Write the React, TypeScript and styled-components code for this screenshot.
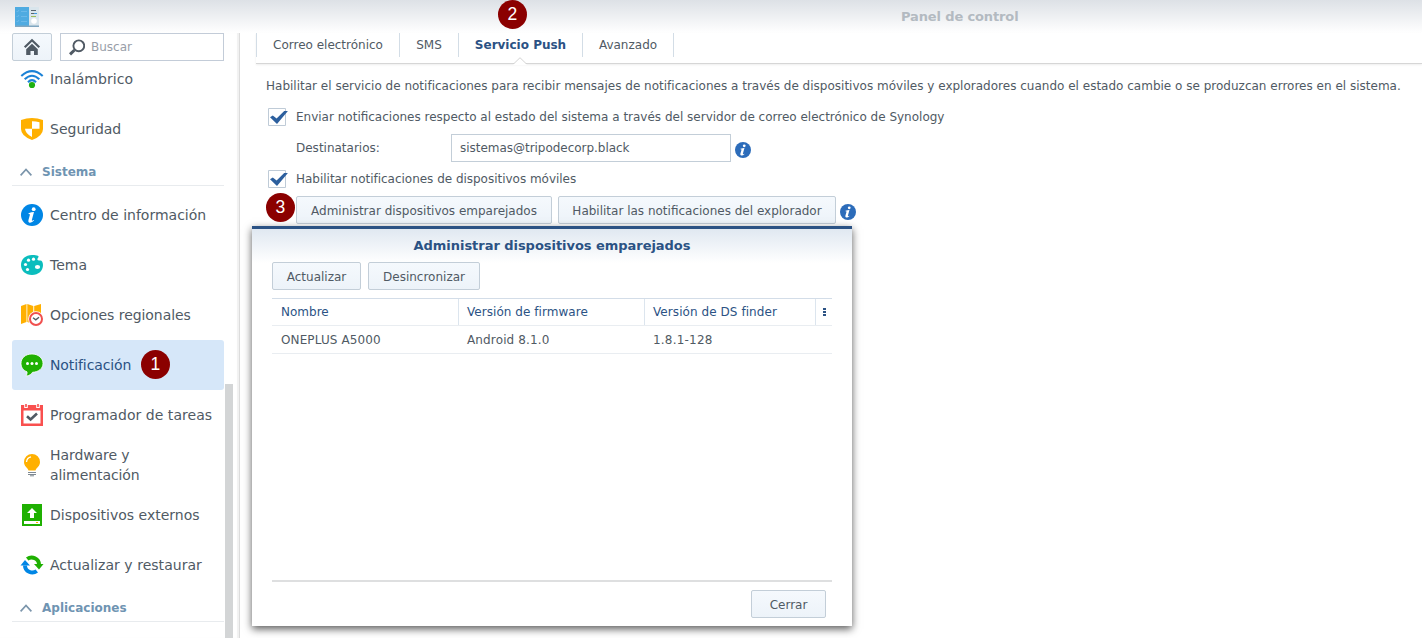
import React from 'react';
import styled, { createGlobalStyle, css } from 'styled-components';

const GlobalStyle = createGlobalStyle`
  * { box-sizing: border-box; }
  body {
    margin: 0;
    background: #fff;
    font-family: "DejaVu Sans", Verdana, sans-serif;
    font-size: 12px;
    color: #505a64;
    overflow: hidden;
  }
`;

const blue = '#2b5284';

const Window = styled.div`
  position: relative;
  width: 1422px;
  height: 638px;
  overflow: hidden;
  display: flex;
  flex-direction: column;
  background: #fff;
`;

const TitleBar = styled.header`
  flex: none;
  height: 33px;
  display: flex;
  align-items: center;
  padding: 0 0 0 14px;
  background: linear-gradient(#dde1e6, #fff);
`;

const WindowTitle = styled.div`
  margin-left: 861px;
  font-size: 13px;
  font-weight: bold;
  line-height: 33px;
  color: #b3bac1;
  white-space: nowrap;
  letter-spacing: -0.13px;
`;

const Body = styled.div`
  flex: 1;
  min-height: 0;
  display: flex;
`;

const Sidebar = styled.aside`
  flex: none;
  width: 240px;
  padding-left: 12px;
  display: flex;
  border-right: 1px solid #dcdcdc;
  box-shadow: inset -2px 0 1px #f1f1f1;
`;

const SidebarColumn = styled.div`
  width: 212px;
  display: flex;
  flex-direction: column;
`;

const SidebarTools = styled.div`
  flex: none;
  display: flex;
  gap: 8px;
`;

const buttonFace = css`
  border: 1px solid #c3ced8;
  border-radius: 2px;
  background: linear-gradient(#f5f9fd, #edf3f9);
`;

const HomeButton = styled.button`
  ${buttonFace}
  width: 40px;
  height: 28px;
  padding: 0;
  display: flex;
  align-items: center;
  justify-content: center;
`;

const Search = styled.div`
  flex: 1;
  height: 28px;
  border: 1px solid #c3ccd8;
  display: flex;
  align-items: center;
  gap: 6px;
  padding-left: 8px;
  color: #989ea8;
`;

const NavScroll = styled.div`
  flex: 1;
  min-height: 0;
  overflow: hidden;
`;

const NavList = styled.nav`
  margin-top: -7px;
`;

const NavItem = styled.div<{ $active?: boolean }>`
  height: 50px;
  display: flex;
  align-items: center;
  gap: 6px;
  padding-left: 8px;
  border-radius: 3px;
  font-size: 14px;
  line-height: 20px;
  background: ${(p) => (p.$active ? '#d6e7f9' : 'transparent')};
  color: ${(p) => (p.$active ? blue : '#505a64')};
`;

const NavLabel = styled.span<{ $track?: number }>`
  white-space: pre;
  letter-spacing: ${(p) => p.$track ?? 0}px;
`;

const NavSection = styled.div`
  height: 32px;
  margin-bottom: 4px;
  padding: 5px 0 0 8px;
  border-bottom: 1px solid #e8ebee;
  display: flex;
  align-items: center;
  gap: 10px;
  font-weight: bold;
  color: #6f94b2;
`;

const ScrollThumb = styled.div`
  width: 8px;
  height: 254px;
  margin-left: 1px;
  align-self: flex-end;
  background: #d3d5d6;
`;

const Main = styled.main`
  flex: 1;
  min-width: 0;
  padding-left: 16px;
`;

const Tabs = styled.div`
  height: 31px;
  display: flex;
  border-bottom: 1px solid #d6d6d6;
  box-shadow: 0 1px 2px #eee;
`;

const Tab = styled.div<{ $width: number; $active?: boolean }>`
  position: relative;
  width: ${(p) => p.$width}px;
  height: 24px;
  display: flex;
  justify-content: center;
  line-height: 25px;
  white-space: nowrap;
  border-left: 1px solid #d3dde6;
  font-weight: ${(p) => (p.$active ? 'bold' : 'normal')};
  color: ${(p) => (p.$active ? blue : 'inherit')};
  &:last-child { border-right: 1px solid #d3dde6; }
`;

const TabNotch = styled.svg`
  position: absolute;
  left: 53px;
  top: 24px;
`;

const Form = styled.div`
  padding: 7px 0 0 10px;
`;

const Row = styled.div<{ $indent?: number }>`
  height: 31px;
  display: flex;
  align-items: flex-start;
  padding-left: ${(p) => p.$indent ?? 0}px;
`;

const Text = styled.span<{ $track?: number; $width?: number }>`
  line-height: 31px;
  white-space: nowrap;
  letter-spacing: ${(p) => p.$track ?? 0}px;
  width: ${(p) => (p.$width ? `${p.$width}px` : 'auto')};
`;

const CheckMark = styled.svg`
  flex: none;
  margin: 6px 8px 0 2px;
`;

const Field = styled.div`
  width: 280px;
  height: 28px;
  margin-top: 1px;
  padding-left: 8px;
  border: 1px solid #c3ced8;
  line-height: 27px;
  letter-spacing: -0.03px;
`;

const Button = styled.button<{ $width: number }>`
  ${buttonFace}
  flex: none;
  width: ${(p) => p.$width}px;
  height: 28px;
  padding: 2px 0 0;
  font: inherit;
  color: inherit;
  line-height: 24px;
  white-space: nowrap;
`;

const FormButton = styled(Button)`
  margin: 1px 6px 0 0;
`;

const InfoMark = styled.svg<{ $gap: number }>`
  flex: none;
  margin: 9px 0 0 ${(p) => p.$gap}px;
`;

const Dialog = styled.section`
  position: absolute;
  left: 252px;
  top: 226px;
  width: 600px;
  height: 400px;
  padding: 0 20px;
  display: flex;
  flex-direction: column;
  border-top: 3px solid ${blue};
  background: linear-gradient(#e0e8f1, #fff 34px);
  box-shadow: 0 3px 8px rgba(0, 0, 0, 0.65);
`;

const DialogTitle = styled.h2`
  margin: 0;
  height: 33px;
  font-size: 13px;
  line-height: 33px;
  text-align: center;
  letter-spacing: -0.04px;
  color: ${blue};
`;

const DialogTools = styled.div`
  display: flex;
  gap: 7px;
  margin-bottom: 8px;
`;

const GridRow = styled.div<{ $head?: boolean }>`
  display: grid;
  grid-template-columns: 187px 186px 171px 16px;
  height: 28px;
  border-top: ${(p) => (p.$head ? '1px solid #d3dde8' : '0')};
  border-bottom: 1px solid #e9edf1;
  color: ${(p) => (p.$head ? blue : 'inherit')};
`;

const Cell = styled.div<{ $head?: boolean; $track?: number }>`
  padding-left: 8px;
  line-height: ${(p) => (p.$head ? 26 : 28)}px;
  white-space: nowrap;
  letter-spacing: ${(p) => p.$track ?? 0}px;
  border-right: 1px solid ${(p) => (p.$head ? '#dce5ee' : 'transparent')};
  &:first-child { padding-left: 9px; }
`;

const MenuCell = styled.div`
  display: flex;
  align-items: center;
  padding-left: 7px;
`;

const DialogFooter = styled.div`
  margin-top: auto;
  height: 46px;
  padding: 8px 6px 0 0;
  display: flex;
  justify-content: flex-end;
  border-top: 2px solid #dedfe0;
`;

const Badge = styled.div<{ $x: number; $y: number }>`
  position: absolute;
  left: ${(p) => p.$x}px;
  top: ${(p) => p.$y}px;
  width: 29.600px;
  height: 29.600px;
  border-radius: 50%;
  background: #8b0000;
  color: #fff;
  font: 17.500px/29px "Liberation Sans", Arial, sans-serif;
  text-align: center;
`;

const PanelIcon = () => (
  <svg width="26" height="22" viewBox="0 0 26 22">
    <path d="M1 1h14v19H1z" fill="#4fabe1" />
    <path d="M15 1h10v19H15z" fill="#d9e5ec" />
    <path d="M1 19.500h24V21H1z" fill="#7fa6c0" />
    <path d="M2.500 5l1 1 1.500-2M2.500 10l1 1 1.500-2M2.500 15l1 1 1.500-2M7 5.500h6M7 10.500h6M7 15.500h6" stroke="#74bdea" strokeWidth=".8" fill="none" />
    <path d="M17 4.500h5M17 7.500h3" stroke="#58646e" />
    <path d="M20 7.500h3" stroke="#3f9bdc" />
    <path d="M17 10.500h5" stroke="#9bbd57" />
    <circle cx="20" cy="15" r="2.800" fill="#fff" />
  </svg>
);

const HomeIcon = () => (
  <svg width="18" height="18" viewBox="0 0 18 18">
    <path d="M1.700 9.300L9 2.300l7.300 7" fill="none" stroke="#505a64" strokeWidth="2.200" />
    <path d="M3.200 11.300L9 5.800l5.800 5.500V17H11v-4H7.500v4H3.200z" fill="#505a64" />
  </svg>
);

const SearchIcon = () => (
  <svg width="16" height="17" viewBox="0 0 16 17">
    <circle cx="9.800" cy="6.800" r="5.400" fill="none" stroke="#505a64" strokeWidth="1.900" />
    <path d="M5.500 11L1 15.300" stroke="#505a64" strokeWidth="3" />
  </svg>
);

const Chevron = () => (
  <svg width="12" height="8" viewBox="0 0 12 8">
    <path d="M.6 7.300L6 1.500l5.400 5.800" fill="none" stroke="#7b95ab" strokeWidth="1.700" />
  </svg>
);

const NavSvg = ({ children }: { children: React.ReactNode }) => (
  <svg width="24" height="24" viewBox="0 0 24 24">{children}</svg>
);

const WifiIcon = () => (
  <NavSvg>
    <g fill="none" stroke="#1b82d6" strokeWidth="2.100">
      <path d="M1.300 9Q12-.600 22.700 9" />
      <path d="M4.700 12.200Q12 5.300 19.300 12.200" />
      <path d="M8 15.300Q12 11 16 15.300" />
    </g>
    <circle cx="12" cy="18" r="3.100" fill="#20b010" />
  </NavSvg>
);

const ShieldIcon = () => (
  <NavSvg>
    <path d="M1 3Q12-1 23 3V12q0 7-11 11Q1 19 1 12z" fill="#ffb000" />
    <path d="M12 4.200q4 0 7.500 1v6.600H12zM5 11.800h7V20q-6.500-3-7-8.200z" fill="#fff" />
  </NavSvg>
);

const InfoGlyph = () => (
  <>
    <circle cx="13.700" cy="6.200" r="1.900" fill="#fff" />
    <path d="M8.500 10.200q3-1.100 5.500-1.100l-2.100 7.600q-.4 1.800 1.700.3l.5.600q-2.200 2.400-4.500 2.100-1.700-.3-1.200-2.500l1.600-5.600q.2-.7-1.400-.7z" fill="#fff" />
  </>
);

const InfoIcon = () => (
  <NavSvg>
    <circle cx="12" cy="12" r="11" fill="#0086e5" />
    <InfoGlyph />
  </NavSvg>
);

const PaletteIcon = () => (
  <NavSvg>
    <path d="M12 2C18 2 19.600 3.300 18.200 4.600 16.500 6.600 17.600 8 20 7.500c1.600-.4 3 1.500 3 4.500 0 5.700-4.500 10-11 10S1 17.700 1 12 5.500 2 12 2z" fill="#0bbdbd" />
    <g fill="#fff">
      <circle cx="13.500" cy="6.200" r="1.600" />
      <circle cx="8.500" cy="7.200" r="1.600" />
      <circle cx="5.500" cy="11.500" r="1.600" />
      <circle cx="7.500" cy="16.500" r="1.600" />
      <ellipse cx="17.500" cy="14" rx="2.600" ry="2.100" />
    </g>
  </NavSvg>
);

const RegionIcon = () => (
  <NavSvg>
    <path d="M1 3l5.500-2v18L1 21zM7.300 1l6 2v18l-6-2zM14.200 3L21 1v18l-6.800 2z" fill="#ffb000" />
    <circle cx="16" cy="16" r="7.800" fill="#fff" />
    <circle cx="16" cy="16" r="6" fill="#fff" stroke="#f0504f" strokeWidth="2" />
    <path d="M13 14.800l2.800 2 3.200-2.500" fill="none" stroke="#505a64" strokeWidth="1.400" />
  </NavSvg>
);

const ChatIcon = () => (
  <NavSvg>
    <path d="M12 1C5.500 1 1 4.900 1 10.500c0 4 2.500 7 6 8.300.3 1.500-.2 2.700-1 4.400 3.500-.5 5.500-2.200 6.500-3.900C18.500 19 23 15.500 23 10.500 23 4.900 18 1 12 1z" fill="#1fb002" stroke="#fff" strokeWidth=".8" />
    <g fill="#fff">
      <circle cx="7.500" cy="10.500" r="1.500" />
      <circle cx="12" cy="10.500" r="1.500" />
      <circle cx="16.500" cy="10.500" r="1.500" />
    </g>
  </NavSvg>
);

const CalendarIcon = () => (
  <NavSvg>
    <path d="M1 2h22v21H1z" fill="#f9504f" />
    <path d="M3.500 7.500h17v13h-17z" fill="#fff" />
    <path d="M4.200 0h3.600v5H4.200zM16.200 0h3.600v5h-3.600z" fill="#fff" />
    <path d="M5.200 1h1.600v3H5.200zM17.200 1h1.600v3h-1.600z" fill="#f9504f" />
    <path d="M7 13.200l3.600 3.300 6.400-6" fill="none" stroke="#505a64" strokeWidth="2.600" />
  </NavSvg>
);

const BulbIcon = () => (
  <NavSvg>
    <path d="M12 1a8 8 0 0 0-8 8c0 4.500 3.700 5.500 4.500 8.500h7C16.300 14.500 20 13.500 20 9a8 8 0 0 0-8-8z" fill="#ffb000" />
    <path d="M6.500 9Q7 4.500 11 3.800" fill="none" stroke="#fff" strokeWidth="1.300" />
    <path d="M8 19.500h8M8 21.500h8M10 22.800h4" stroke="#7e8992" strokeWidth="1" />
  </NavSvg>
);

const DeviceIcon = () => (
  <NavSvg>
    <path d="M2 1h20v22H2z" fill="#1fb002" />
    <path d="M12 5l5 5h-3v5h-4v-5H7zM4 18h16v3H4z" fill="#fff" />
    <path d="M16 19h2v1h-2z" fill="#ffb000" />
  </NavSvg>
);

const RefreshIcon = () => (
  <NavSvg>
    <path d="M7.200 6A7.300 7 0 0 1 19 11.500" fill="none" stroke="#1fb002" strokeWidth="4" />
    <path d="M14 11h9.500L19 16.500z" fill="#1fb002" />
    <path d="M16.800 18A7.300 7 0 0 1 5 12.500" fill="none" stroke="#0086e5" strokeWidth="4" />
    <path d="M.500 12.500L5 7l5 5.500z" fill="#0086e5" />
  </NavSvg>
);

const Checkbox = () => (
  <CheckMark width="20" height="19" viewBox="0 0 20 19">
    <path d="M.5.500h17v17H.5z" fill="#fff" stroke="#bfcbd7" />
    <path d="M2 9.200L4.800 7.600 8.600 10.600 16.200 3H19.900L9 16z" fill="#2c5f9e" />
  </CheckMark>
);

const Info = ({ gap }: { gap: number }) => (
  <InfoMark $gap={gap} width="16" height="16" viewBox="1 1 22 22">
    <circle cx="12" cy="12" r="11" fill="#2c6cba" />
    <InfoGlyph />
  </InfoMark>
);

const systemItems = [
  { label: 'Centro de información', icon: <InfoIcon /> },
  { label: 'Tema', icon: <PaletteIcon /> },
  { label: 'Opciones regionales', icon: <RegionIcon />, track: -0.06 },
  { label: 'Notificación', icon: <ChatIcon />, active: true, track: -0.1 },
  { label: 'Programador de tareas', icon: <CalendarIcon />, track: 0.04 },
  { label: 'Hardware y\nalimentación', icon: <BulbIcon />, track: -0.08 },
  { label: 'Dispositivos externos', icon: <DeviceIcon /> },
  { label: 'Actualizar y restaurar', icon: <RefreshIcon />, track: 0.04 },
];

export default function App() {
  return (
    <Window>
      <GlobalStyle />
      <TitleBar>
        <PanelIcon />
        <WindowTitle>Panel de control</WindowTitle>
      </TitleBar>
      <Body>
        <Sidebar>
          <SidebarColumn>
            <SidebarTools>
              <HomeButton><HomeIcon /></HomeButton>
              <Search><SearchIcon />Buscar</Search>
            </SidebarTools>
            <NavScroll>
              <NavList>
                <NavItem><WifiIcon /><NavLabel $track={0.06}>Inalámbrico</NavLabel></NavItem>
                <NavItem><ShieldIcon /><NavLabel>Seguridad</NavLabel></NavItem>
                <NavSection><Chevron />Sistema</NavSection>
                {systemItems.map((item) => (
                  <NavItem key={item.label} $active={item.active}>
                    {item.icon}
                    <NavLabel $track={item.track}>{item.label}</NavLabel>
                  </NavItem>
                ))}
                <NavSection><Chevron />Aplicaciones</NavSection>
              </NavList>
            </NavScroll>
          </SidebarColumn>
          <ScrollThumb />
        </Sidebar>
        <Main>
          <Tabs>
            <Tab $width={143}>Correo electrónico</Tab>
            <Tab $width={59}>SMS</Tab>
            <Tab $width={124} $active>
              Servicio Push
              <TabNotch width="16" height="8" viewBox="0 0 16 8">
                <path d="M1.500 7L8 .7 14.500 7v1h-13z" fill="#fff" />
                <path d="M1 6.500h1L8 .7l6 5.800h1" fill="none" stroke="#d3d3d3" />
              </TabNotch>
            </Tab>
            <Tab $width={92}>Avanzado</Tab>
          </Tabs>
          <Form>
            <Row>
              <Text $track={0.006}>Habilitar el servicio de notificaciones para recibir mensajes de notificaciones a través de dispositivos móviles y exploradores cuando el estado cambie o se produzcan errores en el sistema.</Text>
            </Row>
            <Row>
              <Checkbox />
              <Text>Enviar notificaciones respecto al estado del sistema a través del servidor de correo electrónico de Synology</Text>
            </Row>
            <Row $indent={30}>
              <Text $width={155}>Destinatarios:</Text>
              <Field>sistemas@tripodecorp.black</Field>
              <Info gap={4} />
            </Row>
            <Row>
              <Checkbox />
              <Text $track={-0.02}>Habilitar notificaciones de dispositivos móviles</Text>
            </Row>
            <Row $indent={30}>
              <FormButton $width={256}>Administrar dispositivos emparejados</FormButton>
              <FormButton $width={278}>Habilitar las notificaciones del explorador</FormButton>
              <Info gap={-2} />
            </Row>
          </Form>
        </Main>
      </Body>
      <Dialog>
        <DialogTitle>Administrar dispositivos emparejados</DialogTitle>
        <DialogTools>
          <Button $width={89}>Actualizar</Button>
          <Button $width={112}>Desincronizar</Button>
        </DialogTools>
        <GridRow $head>
          <Cell $head>Nombre</Cell>
          <Cell $head $track={0.05}>Versión de firmware</Cell>
          <Cell $head $track={0.07}>Versión de DS finder</Cell>
          <MenuCell>
            <svg width="3" height="8" viewBox="0 0 3 8">
              <path d="M0 0h3v2H0zM0 3h3v2H0zM0 6h3v2H0z" fill={blue} />
            </svg>
          </MenuCell>
        </GridRow>
        <GridRow>
          <Cell $track={0.12}>ONEPLUS A5000</Cell>
          <Cell $track={0.14}>Android 8.1.0</Cell>
          <Cell $track={0.2}>1.8.1-128</Cell>
        </GridRow>
        <DialogFooter>
          <Button $width={75}>Cerrar</Button>
        </DialogFooter>
      </Dialog>
      <Badge $x={140.6} $y={349.6}>1</Badge>
      <Badge $x={497.6} $y={-0.3}>2</Badge>
      <Badge $x={265.6} $y={192.5}>3</Badge>
    </Window>
  );
}
